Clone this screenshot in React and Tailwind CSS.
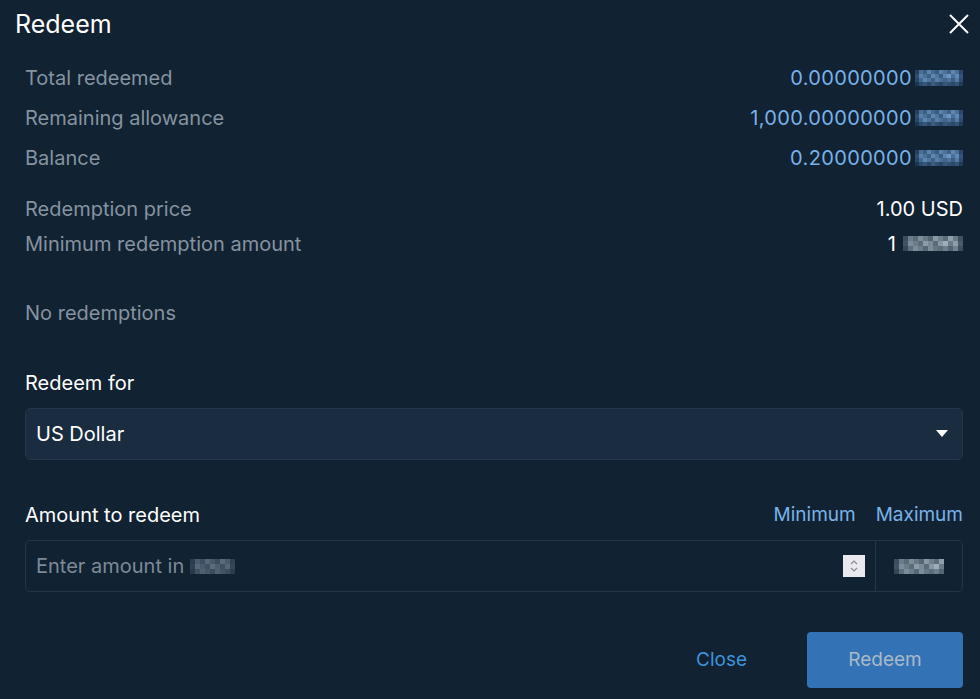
import React from 'react';

// blurred token placeholders, drawn as small pixel grids
const BLUE = [
  ['#23405c', '#4a6f96', '#3d5f82', '#5a84ad', '#46698f', '#3a5a7c', '#5781ab', '#4d7399', '#3f6185', '#5c87b1', '#48709a', '#2b4966'],
  ['#2f4e6e', '#5680aa', '#4b7298', '#3e6084', '#5c88b3', '#4f769e', '#3b5c80', '#5985b0', '#6a95c0', '#4a7099', '#5d89b4', '#34557a'],
  ['#2a4867', '#436890', '#5b86b1', '#4e759d', '#3f6186', '#5680aa', '#4a7099', '#41648a', '#4c739b', '#3b5d81', '#537ca5', '#2e4d6d'],
  ['#1d3650', '#2f4d6b', '#35557a', '#2c4a68', '#3a5b7e', '#324f70', '#2a4765', '#36567a', '#30506f', '#2d4a69', '#33527a', '#213b55'],
];
const GREY = [
  ['#3a4e60', '#6b7d8c', '#5a6b7a', '#7d8d9a', '#677886', '#556676', '#8a98a4', '#6f808e', '#5c6d7c', '#90a0ab', '#6a7b89', '#3f5264'],
  ['#405466', '#7c8c99', '#6c7d8b', '#5b6c7b', '#8d9ca7', '#7a8a97', '#5a6b7a', '#8797a3', '#a0adb6', '#6b7c8a', '#8e9da8', '#4a5d6e'],
  ['#34485a', '#5e6f7e', '#7b8b98', '#6c7c8a', '#566777', '#7c8c99', '#667786', '#5c6d7c', '#6e7e8c', '#536474', '#72828f', '#3c4f61'],
];
const DIM = [
  ['#2a3d4f', '#4a5b6b', '#3d4f60', '#55677a', '#465869', '#3b4d5e', '#5a6b7b', '#4a5c6c', '#2e4254'],
  ['#2f4254', '#55667a', '#4a5b6b', '#3e5061', '#5b6c7c', '#4d5e6e', '#3d4f60', '#56677a', '#334759'],
  ['#273a4c', '#3f5062', '#4e5f6f', '#455667', '#3a4c5d', '#4f6070', '#435465', '#3a4c5d', '#2a3e50'],
];

function Pix({ grid, cell = 4 }) {
  return (
    <span className="inline-flex flex-col align-middle">
      {grid.map((row, r) => (
        <span key={r} className="flex">
          {row.map((c, i) => (
            <span key={i} style={{ width: cell, height: cell, background: c }} />
          ))}
        </span>
      ))}
    </span>
  );
}

function Row({ label, value, blob, white, h = 'h-10' }) {
  return (
    <div className={`flex items-center justify-between ${h}`}>
      <span className="text-[#8693a0]">{label}</span>
      <span className={`flex items-center gap-[3px] ${white ? 'text-white' : 'tracking-[0.35px] text-[#79b2e9]'}`}>
        {value}
        {blob}
      </span>
    </div>
  );
}

export default function App() {
  return (
    <div className="min-h-[699px] bg-[#112232] font-['Inter',sans-serif] text-[20px] text-white">
      {/* header */}
      <div className="flex h-[47px] items-center justify-between pl-[15px] pr-[10px]">
        <h1 className="mt-[3px] text-[25px] font-normal">Redeem</h1>
        <svg width="22" height="22" viewBox="0 0 22 22" className="text-white">
          <path d="M2 2 L20 20 M20 2 L2 20" stroke="currentColor" strokeWidth="2" />
        </svg>
      </div>

      <div className="pl-[25px] pr-[17px] pt-[11px]">
        <Row label="Total redeemed" value="0.00000000" blob={<Pix grid={BLUE} />} />
        <Row label="Remaining allowance" value="1,000.00000000" blob={<Pix grid={BLUE} />} />
        <Row label="Balance" value="0.20000000" blob={<Pix grid={BLUE} />} />
        <div className="h-[13px]" />
        <Row label="Redemption price" value="1.00 USD" white h="h-[35px]" />
        <Row
          label="Minimum redemption amount"
          value={<span className="mr-[4px]">1</span>}
          blob={<Pix grid={GREY} cell={5} />}
          white
          h="h-[35px]"
        />

        <div className="mt-[32px] flex h-10 items-center text-[#8693a0]">No redemptions</div>

        <div className="mt-[30px] flex h-10 items-center">Redeem for</div>
        <div className="mt-[5px] flex h-[52px] items-center justify-between rounded-[5px] border border-[#23374b] bg-[#1a2c3f] pl-[10px] pr-[14px]">
          <span>US Dollar</span>
          <svg width="12" height="8" viewBox="0 0 12 8">
            <path d="M0 0 H12 L6 7 Z" fill="#ffffff" />
          </svg>
        </div>

        <div className="mt-[35px] flex h-10 items-center justify-between">
          <span>Amount to redeem</span>
          <div className="flex gap-5 text-[19px] text-[#79b2e9]">
            <span>Minimum</span>
            <span>Maximum</span>
          </div>
        </div>
        <div className="mt-[5px] flex h-[52px] rounded-[5px] border border-[#23374b]">
          <div className="flex flex-1 items-center justify-between pl-[10px] pr-[10px]">
            <span className="flex items-center gap-[6px] text-[#7d8a97]">
              Enter amount in
              <Pix grid={DIM} cell={5} />
            </span>
            <span className="flex h-[22px] w-[22px] flex-col items-center justify-center bg-[#e9e9ef]">
              <svg width="10" height="16" viewBox="0 0 10 16">
                <path d="M2 6 L5 3 L8 6 M2 10 L5 13 L8 10" stroke="#8a8a96" strokeWidth="1.2" fill="none" />
              </svg>
            </span>
          </div>
          <div className="flex w-[87px] items-center justify-center border-l border-[#23374b]">
            <Pix grid={GREY.map(r => r.slice(0, 10))} cell={5} />
          </div>
        </div>

        <div className="mt-10 flex items-center justify-end gap-[60px] text-[19px]">
          <span className="text-[#3f92dc]">Close</span>
          <button className="flex h-[56px] w-[156px] items-center justify-center rounded-[4px] bg-[#3373b5] text-[#a9b9c8]">
            Redeem
          </button>
        </div>
      </div>
    </div>
  );
}
